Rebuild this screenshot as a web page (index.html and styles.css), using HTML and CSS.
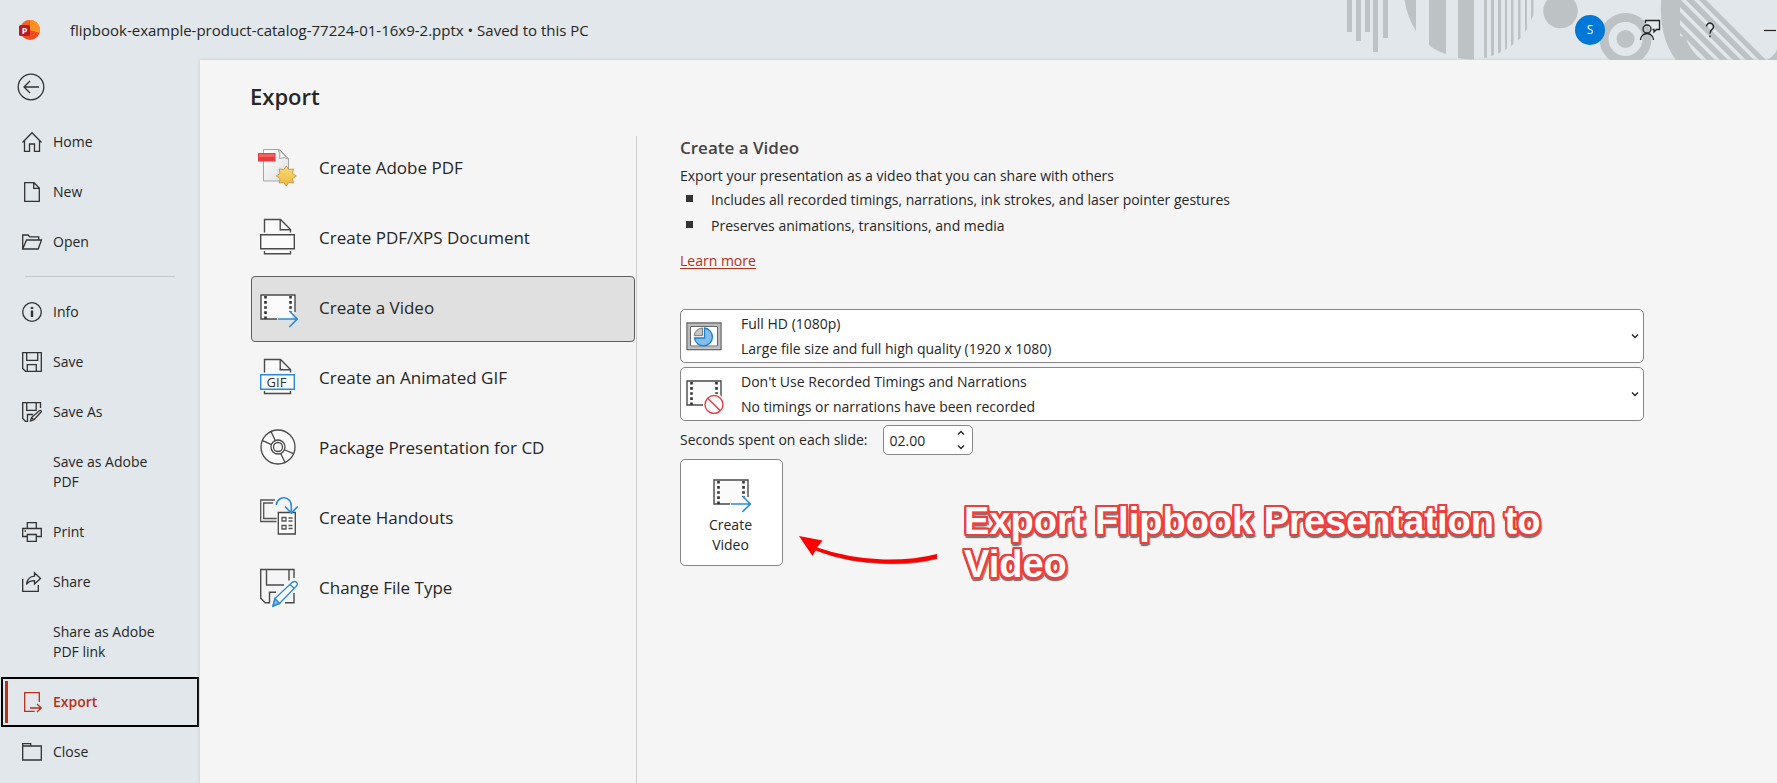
FILE: index.html
```html
<!DOCTYPE html>
<html lang="en">
<head>
<meta charset="utf-8">
<meta name="viewport" content="width=device-width, initial-scale=1">
<title>Export - PowerPoint</title>
<link rel="stylesheet" href="styles.css">
</head>
<body>
<svg class="defs" width="0" height="0" aria-hidden="true">
  <symbol id="film" viewBox="0 0 40 40">
    <path d="M3 7h34v16l-4 8H3z" fill="#fbfbfb"/>
    <path d="M37 24V7H3v24h16" fill="none" stroke="#4a4a4a" stroke-width="1.400"/>
    <path d="M7.500 8v24M32.500 8v16" fill="none" stroke="#333" stroke-width="2.600" stroke-dasharray="2.600 2.500"/>
  </symbol>
  <symbol id="film-arrow" viewBox="0 0 40 40">
    <use href="#film" width="40" height="40"/>
    <path d="M20 31h19M31.300 23l8 8-8 8" fill="none" stroke="#2b8ad6" stroke-width="1.600"/>
  </symbol>
  <symbol id="chev-down" viewBox="0 0 8 6"><path d="M1 1.500l3 3 3-3" fill="none" stroke="#222" stroke-width="1.300"/></symbol>
  <symbol id="chev-up" viewBox="0 0 8 6"><path d="M1 4.500l3-3 3 3" fill="none" stroke="#222" stroke-width="1.300"/></symbol>
</svg>

<header class="titlebar">
  <svg class="pattern" width="447" height="60" viewBox="0 0 447 60" aria-hidden="true">
    <defs><clipPath id="stripes"><path d="M350 0h97v60h-97z"/></clipPath></defs>
    <g fill="#bdc2c5">
      <path d="M17 0h5v32h-5zM26 0h5v41h-5zM35 0h5v32h-5zM43 0h5v52h-5zM53 0h5v38h-5z"/>
      <path d="M74.500 0H86v31Q77 17 74.500 0zM99 0h17v54Q106 51 99 45zM128 0h16v59.500Q135 59.500 128 58z"/>
      <path d="M154 0h3v57.500l-3 .500zM161 0h3v55l-3 1zM168 0h3v52l-3 1.500zM175 0h2v48.500l-2 1.500zM181 0h2.500v44l-2.500 2zM188 0h2.500v38l-2.500 2.500zM195 0h2v29l-2 3zM201 0h2.500v15l-2.500 5z"/>
      <circle cx="230.500" cy="11" r="17.300"/>
      <circle cx="295.500" cy="39" r="9"/>
      <path d="M331 0h19v36l5 1q6 15 17 23h-26Q329 38 331 0z"/>
      <path clip-path="url(#stripes)" d="M369 0h7l60 60h-7zM356 0h8l60 60h-8zM343 0h8l60 60h-8zM330 0h8l60 60h-8zM317 0h8l60 60h-8z"/>
      <path d="M437 60q6-3 10-10v10z"/>
    </g>
    <circle cx="295.500" cy="39" r="21.500" fill="none" stroke="#bdc2c5" stroke-width="9"/>
  </svg>
  <svg class="logo" width="22" height="22" viewBox="0 0 22 22" aria-hidden="true">
    <circle cx="11" cy="11" r="10" fill="#f04a23"/>
    <path d="M11 1a10 10 0 0 1 9.500 13L11 11z" fill="#ff9a26"/>
    <path d="M11 1v10h9.900A10 10 0 0 0 11 1z" fill="#ff8f1f"/>
    <path d="M11 1A10 10 0 0 0 2 7h9z" fill="#f4661f"/>
    <rect x="0" y="6" width="11" height="11" rx="1.500" fill="#b91c1f"/>
    <text x="5.500" y="15" class="logo-letter">P</text>
  </svg>
  <div class="doc-title">flipbook-example-product-catalog-77224-01-16x9-2.pptx • Saved to this PC</div>
  <div class="window-tools">
    <button class="avatar" aria-label="Account">S</button>
    <button class="tool feedback" aria-label="Feedback">
      <svg width="22" height="22" viewBox="0 0 22 22" fill="none" stroke="#222" stroke-width="1.300"><circle cx="8" cy="10" r="4"/><path d="M1.500 21a6.500 6.500 0 0 1 13 0M6.500 4V1.500h14v9h-3l-2.500 2.500v-2.500h-1.500"/></svg>
    </button>
    <button class="tool help" aria-label="Help">
      <svg width="12" height="16" viewBox="0 0 12 16" fill="none" stroke="#222" stroke-width="1.400"><path d="M2.500 4.500a3.500 3.500 0 1 1 6 2.500C7 8.500 6 9 6 11.500M6 13.500v1.800"/></svg>
    </button>
    <button class="tool minimise" aria-label="Minimize">
      <svg width="13" height="3" viewBox="0 0 13 3"><path d="M0 1.500h12" stroke="#222" stroke-width="1.200"/></svg>
    </button>
  </div>
</header>

<div class="backstage">
  <nav class="sidebar" aria-label="File">
    <button class="back" aria-label="Back">
      <svg width="28" height="28" viewBox="0 0 28 28" fill="none" stroke="#333" stroke-width="1.300"><circle cx="14" cy="14" r="12.800"/><path d="M22 14H7M13 8l-6 6 6 6"/></svg>
    </button>
    <a class="nav-item" href="#home"><svg viewBox="0 0 20 20"><path d="M.500 10.500L10 .800l9.500 9.700M2.500 9v10.300h5V12h5v7.300h5V9"/></svg><span>Home</span></a>
    <a class="nav-item" href="#new"><svg viewBox="0 0 20 20"><path d="M2.700.700h9.300l5.300 5.300v13.300H2.700zM11.700.700v5.600h5.600"/></svg><span>New</span></a>
    <a class="nav-item" href="#open"><svg viewBox="0 0 20 20"><path d="M.700 17V3h5.500l1.500 1.800h9V8M.700 17L4.500 8h15l-3.300 9z"/></svg><span>Open</span></a>
    <hr class="nav-rule">
    <a class="nav-item" href="#info"><svg viewBox="0 0 20 20"><circle cx="10" cy="10" r="9.300"/><path d="M10 8.500V15M10 5v2" stroke-width="2.400"/></svg><span>Info</span></a>
    <a class="nav-item" href="#save"><svg viewBox="0 0 20 20"><path d="M.700.700h18.600v18.600H3.500L.700 16.500zM4.700.700v7.600h11V.700M5.300 19.300v-6.600h9v6.600"/></svg><span>Save</span></a>
    <a class="nav-item" href="#save-as"><svg viewBox="0 0 20 20"><path d="M18.500 6V.700H.700v15.800l2.800 2.800h2V12.500H11M4.700.700v7.600h9.500V.700M8.500 19l1-3.500 8-7q1.500-.500 1.800 1.200l-7.300 8zM10 16l1.500 1.500"/></svg><span>Save As</span></a>
    <a class="nav-item text-only" href="#save-pdf"><span>Save as Adobe PDF</span></a>
    <a class="nav-item" href="#print"><svg viewBox="0 0 20 20"><path d="M5.300 6.500V.700h9v5.800M5.300 14.500H.700v-8h18.600v8h-5M5.300 12.500h9v6.800h-9zM2.500 9h1.500"/></svg><span>Print</span></a>
    <a class="nav-item" href="#share"><svg viewBox="0 0 20 20"><path d="M.700 7v12.300h15.600V13M4.500 12.500Q5.500 4.500 12.500 4.200V.800l6 5.700-6 5.500V8.700Q7 8.500 4.500 12.500z"/></svg><span>Share</span></a>
    <a class="nav-item text-only" href="#share-pdf"><span>Share as Adobe PDF link</span></a>
    <a class="nav-item current" href="#export" aria-current="page"><svg viewBox="0 0 20 20"><path d="M17.300 10V.700H2.700v18.600h10M8 16h11M15 12l4.200 4-4.200 4"/></svg><span>Export</span></a>
    <a class="nav-item" href="#close"><svg viewBox="0 0 20 20"><path d="M.700 18V1.700h8V4M.700 4h18.600v14H.700z"/></svg><span>Close</span></a>
  </nav>

  <main class="main">
    <h1>Export</h1>
    <div class="columns">
      <div class="options">
        <button class="option">
          <svg viewBox="0 0 40 40">
            <defs>
              <linearGradient id="page" x2="1" y2="1"><stop offset="0" stop-color="#fff"/><stop offset="1" stop-color="#dedede"/></linearGradient>
              <linearGradient id="gold" x2="0" y2="1"><stop offset="0" stop-color="#f9dd7c"/><stop offset="1" stop-color="#efb73a"/></linearGradient>
            </defs>
            <path d="M5.500 1.500h16l9 9v22.500h-25z" fill="url(#page)" stroke="#a5a5a5"/>
            <path d="M20 1.500q3 4 1.500 9 5-2 9 .500z" fill="#fff" stroke="#a5a5a5"/>
            <path d="M0 5h17.500v8.500H0z" fill="#e83b3f"/><path d="M1 6h15.500v3H1z" fill="#f4605f"/>
            <path d="M28.300 18l2.600 3.700 4.500-.800-.8 4.500 3.700 2.600-3.700 2.600.8 4.500-4.500-.8-2.600 3.700-2.600-3.700-4.500.8.8-4.500-3.700-2.600 3.700-2.600-.8-4.500 4.500.8z" fill="url(#gold)" stroke="#c58a3a" stroke-width=".8"/>
          </svg>
          <span>Create Adobe PDF</span>
        </button>
        <button class="option">
          <svg viewBox="0 0 40 40" fill="#fbfbfb" stroke="#4a4a4a" stroke-width="1.400">
            <path d="M6.500 14.500v-13h16l10 10v3M22.200 1.500v10.300h10.300M6.500 33v2.800h26V33"/><path d="M2.700 16.700h33.600v14H2.700z"/>
          </svg>
          <span>Create PDF/XPS Document</span>
        </button>
        <button class="option selected" aria-pressed="true">
          <svg viewBox="0 0 40 40"><use href="#film-arrow"/></svg>
          <span>Create a Video</span>
        </button>
        <button class="option">
          <svg viewBox="0 0 40 40" fill="#fbfbfb" stroke="#4a4a4a" stroke-width="1.400">
            <path d="M6.500 14.500v-13h16l10 10v3M22.200 1.500v10.300h10.300M6.500 33v2.500h26V33"/><path d="M2.700 16.700h33.600v14.500H2.700z" stroke="#2b8ad6"/>
            <text x="18.500" y="28.500" class="gif-label">GIF</text>
          </svg>
          <span>Create an Animated GIF</span>
        </button>
        <button class="option">
          <svg viewBox="0 0 40 40" fill="none" stroke="#4a4a4a" stroke-width="1.300">
            <circle cx="20" cy="19" r="17" fill="#fbfbfb"/><circle cx="20" cy="19" r="7"/><circle cx="20" cy="19" r="4.500"/>
            <path d="M13 3.500l4.300 9M4.700 12.700l8.600 4M27 22l8.300 3.700M22.700 25.500l4.300 9"/>
          </svg>
          <span>Package Presentation for CD</span>
        </button>
        <button class="option">
          <svg viewBox="0 0 40 40" fill="none" stroke="#555" stroke-width="1.300">
            <path d="M17 2H2.700v21.500H18.500M15 5H5.700v15.500h13"/>
            <path d="M20.300 14.500h17V36h-17z" fill="#fbfbfb" stroke="#444"/>
            <path d="M24 19.500h4V23h-4zM24 27.500h4V31h-4zM30.500 20h4M30.500 23h4M30.500 27.500h4M30.500 30.500h4"/>
            <path d="M18.300 7C19 1 24-.5 26.500-.3 31 0 33.300 4 33.300 8v6.500M27 8.500l6.300 6.500 6.300-6.500" stroke="#2b8ad6" stroke-width="1.600"/>
          </svg>
          <span>Create Handouts</span>
        </button>
        <button class="option">
          <svg viewBox="0 0 40 40" fill="none" stroke="#4a4a4a" stroke-width="1.400">
            <path d="M36 10V1.500H2.700v28.700l4.500 4.500h5M36 25v9.700h-9M8.500 1.500V17H26M31 1.500v11M18 24.300h-6.500v10"/>
            <path d="M15 38l2-7.500L34.500 14q3-1.500 4.500 1 .5 2-.5 3L21.500 35.500z" fill="#fbfbfb" stroke="#2b8ad6"/>
            <path d="M15 38l2-7.500 4.500 5z" fill="#7fbdec" stroke="#2b8ad6"/><path d="M32 16.500l4.500 4" stroke="#2b8ad6"/>
          </svg>
          <span>Change File Type</span>
        </button>
      </div>

      <section class="panel" aria-labelledby="panel-title">
        <h2 id="panel-title">Create a Video</h2>
        <p>Export your presentation as a video that you can share with others</p>
        <ul class="features">
          <li>Includes all recorded timings, narrations, ink strokes, and laser pointer gestures</li>
          <li>Preserves animations, transitions, and media</li>
        </ul>
        <a class="learn" href="#learn">Learn more</a>

        <form class="settings">
          <div class="combo">
            <select aria-label="Video quality" aria-describedby="quality-note"><option>Full HD (1080p)</option></select>
            <div class="combo-face">
              <svg class="combo-icon" width="40" height="40" viewBox="0 0 40 40" fill="none">
                <path d="M3 7h34v26.500H3z" fill="#fff" stroke="#666" stroke-width="1.400"/><path d="M5 9h30v22.500H5z" stroke="#bbb" stroke-width="2"/><path d="M6.500 10.500h27v19.500h-27z" stroke="#666"/>
                <path d="M20.500 12a9 9 0 1 1-10 10h10z" fill="#83beec" stroke="#1f7fcb" stroke-width="1.300"/>
                <path d="M18.500 12v7.700h-8.300a8.500 8.500 0 0 1 8.300-7.700z" fill="#c8c6c4" stroke="#777"/>
              </svg>
              <span class="note" id="quality-note">Large file size and full high quality (1920 x 1080)</span>
              <svg class="chev" width="8" height="6"><use href="#chev-down"/></svg>
            </div>
          </div>
          <div class="combo">
            <select aria-label="Timings and narrations" aria-describedby="timing-note"><option>Don't Use Recorded Timings and Narrations</option></select>
            <div class="combo-face">
              <svg class="combo-icon" width="40" height="40" viewBox="0 0 40 40" fill="none">
                <use href="#film" width="40" height="40"/>
                <circle cx="30" cy="30.500" r="11" fill="#fff"/><circle cx="30" cy="30.500" r="9" fill="#fff" stroke="#ee3a43" stroke-width="1.400"/><path d="M23.700 24.200l12.600 12.600" stroke="#ee3a43" stroke-width="1.400"/>
              </svg>
              <span class="note" id="timing-note">No timings or narrations have been recorded</span>
              <svg class="chev" width="8" height="6"><use href="#chev-down"/></svg>
            </div>
          </div>
          <div class="seconds">
            <label for="secs">Seconds spent on each slide:</label>
            <div class="spinner">
              <input id="secs" type="text" inputmode="decimal" value="02.00">
              <div class="spin-buttons">
                <button type="button" aria-label="Increase"><svg width="8" height="6"><use href="#chev-up"/></svg></button>
                <button type="button" aria-label="Decrease"><svg width="8" height="6"><use href="#chev-down"/></svg></button>
              </div>
            </div>
          </div>
          <div class="action-row">
            <button type="button" class="create">
              <svg width="40" height="40" viewBox="0 0 40 40"><use href="#film-arrow"/></svg>
              <span>Create Video</span>
            </button>
            <svg class="arrow" width="140" height="32" viewBox="0 0 140 32" aria-hidden="true">
              <path d="M20 14Q52 26 85 26.500 115 28 138 21.500" fill="none" stroke="#8a8a8a" stroke-width="3" transform="translate(0 1)"/>
              <path d="M0 1l23.500 4.500-5.500 7Q50 23.500 85 24.500 115 25 138 19v4.500Q115 29.500 85 28.500 48 27.500 16.500 15.500L13.500 21z" fill="#fe0000"/>
            </svg>
            <p class="callout">Export Flipbook Presentation to Video</p>
          </div>
        </form>
      </section>
    </div>
  </main>
</div>
</body>
</html>
```

FILE: styles.css
```css
* {
  box-sizing: border-box;
}

body {
  margin: 0;
  min-height: 100vh;
  display: flex;
  flex-direction: column;
  background: #e1e7ea;
  color: #262626;
  font: 14px/20px "Open Sans", "Noto Sans", sans-serif;
  overflow: hidden;
}

button,
input,
select {
  font: inherit;
  color: inherit;
}

button {
  padding: 0;
  border: 0;
  background: none;
}

.defs {
  position: absolute;
}

/* Title bar */
.titlebar {
  position: relative;
  display: flex;
  align-items: center;
  height: 60px;
  padding-left: 19px;
}

.pattern {
  position: absolute;
  top: 0;
  right: 0;
}

.logo {
  margin-right: 29px;
}

.logo-letter {
  font: bold 9px "Open Sans", sans-serif;
  fill: #fff;
  text-anchor: middle;
}

.doc-title {
  font-size: 15px;
}

.window-tools {
  position: relative;
  display: flex;
  align-items: center;
  margin-left: auto;
}

.avatar {
  width: 30px;
  height: 30px;
  border-radius: 50%;
  background: #0078d7;
  color: #fff;
  font-size: 12px;
}

.tool {
  display: grid;
  place-items: center;
}

.feedback {
  margin-left: 34px;
}

.help {
  margin-left: 43px;
}

.minimise {
  margin-left: 48px;
}

/* Sidebar */
.backstage {
  flex: 1;
  display: flex;
}

.sidebar {
  width: 200px;
  flex: none;
}

.back {
  display: block;
  margin: 13px 0 16px 17px;
  height: 28px;
}

.nav-item {
  display: flex;
  align-items: center;
  gap: 11px;
  min-height: 50px;
  padding: 0 22px;
  color: inherit;
  text-decoration: none;
}

.nav-item svg {
  flex: none;
  width: 20px;
  height: 20px;
  fill: none;
  stroke: #333;
  stroke-width: 1.3px;
  overflow: visible;
}

.text-only {
  min-height: 70px;
  padding: 0 30px 0 53px;
}

.nav-rule {
  margin: 9px 25px 10px;
  border: 0;
  border-top: 1px solid #c6c8c9;
}

.current {
  margin: 0 1px;
  padding: 0 21px 0 19px;
  border: 2px solid #000;
  color: #b7301c;
  font-weight: 600;
  background: linear-gradient(#b7301c, #b7301c) 2px 2px / 3px 42px no-repeat;
}

.current svg {
  stroke: #b7301c;
}

/* Main area */
.main {
  flex: 1;
  display: flex;
  flex-direction: column;
  min-width: 0;
  padding: 19px 133px 0 50px;
  background: #f5f5f5;
  box-shadow: 0 0 3px #c3c8ca;
}

h1 {
  margin: 0 0 23px;
  font-size: 22px;
  line-height: 34px;
  font-weight: 600;
}

.columns {
  flex: 1;
  display: flex;
}

.options {
  display: flex;
  flex-direction: column;
  gap: 4px;
  width: 387px;
  flex: none;
  padding: 0 1px;
  border-right: 1px solid #cfcfcf;
}

.option {
  display: flex;
  align-items: center;
  gap: 21px;
  height: 66px;
  padding: 0 6px 2px;
  border: 1px solid transparent;
  border-radius: 4px;
  font-size: 17px;
  line-height: 24px;
  text-align: left;
}

.option svg {
  width: 40px;
  height: 40px;
  overflow: visible;
}

.selected {
  border-color: #5e5e5e;
  background: #e0e0e0;
}

.gif-label {
  font: 13px "Open Sans", sans-serif;
  fill: #333;
  stroke: none;
  text-anchor: middle;
}

/* Detail panel */
.panel {
  flex: 1;
  min-width: 0;
  padding-left: 43px;
}

h2 {
  margin: 0 0 4px;
  color: #444;
  font-size: 17px;
  line-height: 24px;
  font-weight: 600;
}

p {
  margin: 0;
  line-height: 24px;
}

.features {
  display: grid;
  gap: 2px;
  margin: 0 0 11px;
  padding: 0 0 0 6px;
  list-style: none;
  line-height: 24px;
}

.features li {
  display: flex;
  align-items: center;
  gap: 18px;
}

.features li::before {
  content: "";
  width: 7px;
  height: 7px;
  margin-bottom: 3px;
  background: #333;
}

.learn {
  display: inline-block;
  color: #b7301c;
  line-height: 24px;
  text-underline-offset: 2px;
}

.settings {
  display: grid;
  gap: 4px;
  margin-top: 36px;
}

.combo {
  display: grid;
  height: 54px;
}

.combo select,
.combo-face {
  grid-area: 1 / 1;
}

.combo select {
  appearance: none;
  width: 100%;
  padding: 0 24px 24px 60px;
  border: 1px solid #868686;
  border-radius: 5px;
  background: #fff;
}

.combo-face {
  display: flex;
  align-items: center;
  padding: 0 5px 0 4px;
  pointer-events: none;
}

.note {
  flex: 1;
  margin-left: 17px;
  padding-top: 26px;
}

.seconds {
  display: flex;
  align-items: center;
  gap: 15px;
}

.spinner {
  display: flex;
  width: 90px;
  height: 30px;
  padding: 0 7px 0 6px;
  border: 1px solid #868686;
  border-radius: 5px;
  background: #fff;
}

.spinner input {
  flex: 1;
  min-width: 0;
  padding: 2px 0 0;
  border: 0;
  background: none;
  outline: none;
}

.spin-buttons {
  display: grid;
}

.spin-buttons button {
  display: grid;
  place-items: center;
}

.action-row {
  display: flex;
  align-items: flex-start;
}

.create {
  display: flex;
  flex-direction: column;
  align-items: center;
  gap: 2px;
  width: 103px;
  height: 107px;
  flex: none;
  padding: 13px 26px 0 24px;
  border: 1px solid #868686;
  border-radius: 5px;
  background: #fff;
}

.arrow {
  flex: none;
  margin: 76px 25px 0 16px;
}

.callout {
  max-width: 600px;
  margin-top: 41px;
  color: #fff;
  font: bold 38px/43px "Liberation Sans", Arial, sans-serif;
  text-shadow:
    2px 0 #f03e3e, -2px 0 #f03e3e, 0 2px #f03e3e, 0 -2px #f03e3e,
    2px 1px #f03e3e, -2px 1px #f03e3e, 2px -1px #f03e3e, -2px -1px #f03e3e,
    1px 2px #f03e3e, -1px 2px #f03e3e, 1px -2px #f03e3e, -1px -2px #f03e3e,
    2px 2px #f03e3e, -2px 2px #f03e3e, 2px -2px #f03e3e, -2px -2px #f03e3e,
    1px 4px 1px #777, 3px 3px 1px #777, -1px 4px 1px #777;
}
```
